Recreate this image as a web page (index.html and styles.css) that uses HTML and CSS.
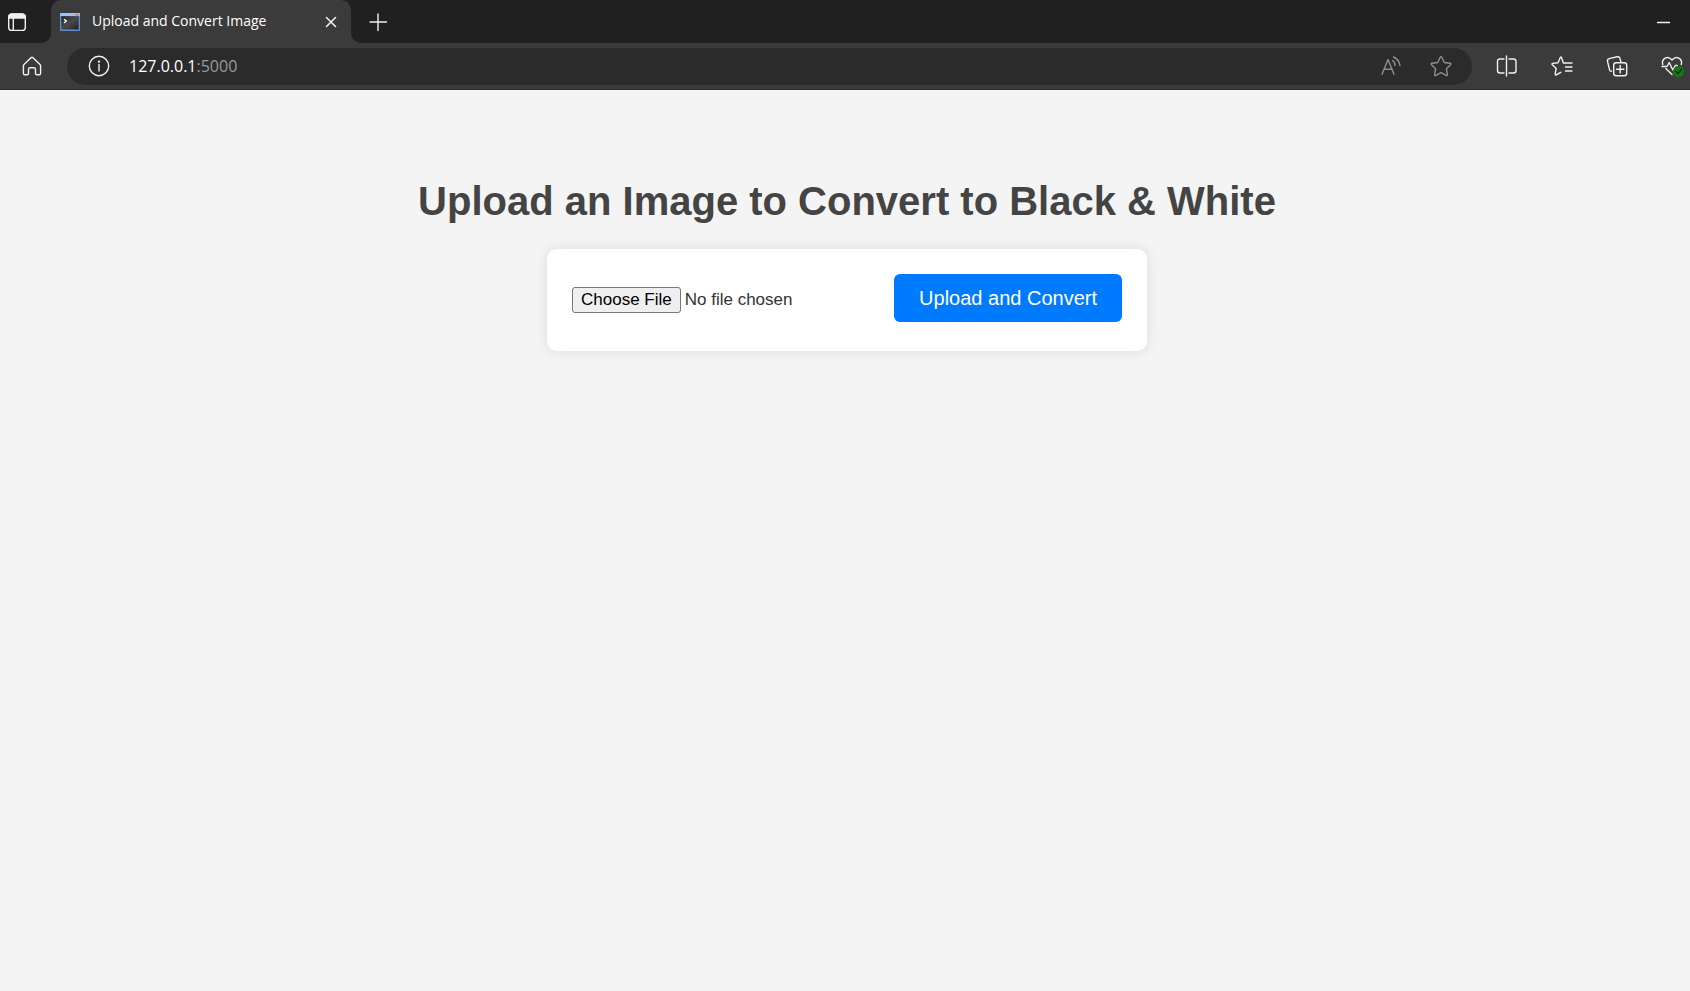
FILE: index.html
```html
<!DOCTYPE html>
<html lang="en">
<head>
<meta charset="utf-8">
<title>Upload and Convert Image</title>
<link rel="stylesheet" href="styles.css">
</head>
<body>
<header class="browser">
  <div class="tab-strip">
    <div class="strip-start">
      <button class="icon-button" type="button" aria-label="Tab actions">
        <svg class="icon" viewBox="0 0 24 24"><rect x="3.7" y="4.2" width="16.6" height="16.2" rx="3"/><path d="M8.3 8v12"/><path class="solid" d="M4 8V7q0-3 3-3h10q3 0 3 3v1z"/></svg>
      </button>
    </div>
    <div class="tab-slot">
      <div class="tab">
        <svg class="favicon" viewBox="0 0 20 18" aria-hidden="true">
          <defs><linearGradient id="screen" x1="0" y1="0" x2="1" y2="1"><stop offset="0" stop-color="#222"/><stop offset=".5" stop-color="#4a4a4a"/><stop offset="1" stop-color="#222"/></linearGradient></defs>
          <rect width="20" height="18" rx="1" fill="#5f8fd0"/>
          <rect x="0" y="0" width="20" height="3" rx="1" fill="#9cc3f2"/>
          <rect x="15.5" y="1" width="3" height="1.4" fill="#d66a5e"/>
          <rect x="1.3" y="3.2" width="17.4" height="13.3" fill="url(#screen)"/>
          <path d="M4 6.2l2.400 1.900L4 10" fill="none" stroke="#fff" stroke-width="1.300"/>
        </svg>
        <span class="tab-title">Upload and Convert Image</span>
        <button class="icon-button" type="button" aria-label="Close tab">
          <svg class="icon" viewBox="0 0 24 24"><path class="heavy" d="M7.500 7.500l9 9M16.500 7.500l-9 9"/></svg>
        </button>
      </div>
    </div>
    <div class="strip-end">
      <button class="icon-button" type="button" aria-label="New tab">
        <svg class="icon" viewBox="0 0 24 24"><path d="M12 4v16.500M4 12h16.500"/></svg>
      </button>
      <button class="icon-button" type="button" aria-label="Minimize">
        <svg class="icon" viewBox="0 0 24 24"><path d="M6.500 12.500h12"/></svg>
      </button>
    </div>
  </div>
  <div class="toolbar">
    <button class="icon-button" type="button" aria-label="Home">
      <svg class="icon" viewBox="0 0 24 24"><path d="M4 10.400 11 3.700q1-.9 2 0L20 10.400q.6.600.6 1.400v7.400q0 1.600-1.600 1.600h-2.100q-1.400 0-1.400-1.400v-4q0-1.700-1.700-1.700h-3.600q-1.700 0-1.700 1.700v4q0 1.400-1.400 1.400H5q-1.600 0-1.600-1.600v-7.400q0-.8.6-1.400z"/></svg>
    </button>
    <div class="address-bar">
      <button class="icon-button" type="button" aria-label="View site information">
        <svg class="icon" viewBox="0 0 24 24"><circle cx="12" cy="12" r="9.700"/><path d="M12 10.500v6.500"/><circle class="solid" cx="12" cy="7.600" r=".5"/></svg>
      </button>
      <span class="address">127.0.0.1<span class="port">:5000</span></span>
      <button class="icon-button dim" type="button" aria-label="Read aloud">
        <svg class="icon" viewBox="0 0 24 24"><path d="M3 20.200 9 5.500l6 14.700M5 15.200h8M13.500 6.500q2.500 1.500 2.500 5M14.500 3q5.500 2.500 6.500 8.500"/></svg>
      </button>
      <button class="icon-button dim" type="button" aria-label="Add to favorites">
        <svg class="icon" viewBox="0 0 24 24"><path d="M11.200 3.300q.8-1.300 1.600 0l2.500 5.200 5.700.8q1.500.3.500 1.400l-4.100 4 1 5.700q.1 1.500-1.300.9L12 18.600l-5.100 2.700q-1.400.6-1.300-.9l1-5.700-4.100-4q-1-1.100.5-1.400l5.700-.8z"/></svg>
      </button>
    </div>
    <div class="actions">
      <button class="icon-button" type="button" aria-label="Split screen">
        <svg class="icon" viewBox="0 0 24 24"><path d="M9 5H5Q2.500 5 2.500 7.500v9Q2.500 19 5 19h4M14 5h4.500Q21 5 21 7.500v9q0 2.500-2.500 2.500H14M11.500 2v20"/></svg>
      </button>
      <button class="icon-button" type="button" aria-label="Favorites">
        <svg class="icon" viewBox="0 0 24 24"><path d="M14.500 9H22M15.500 13H22M15.500 17H22M13.500 9.200 11.500 3.500q-.6-1-1.200 0L8 8.700l-5.200.7q-1.500.3-.4 1.400l3.800 3.600-1 5.700q0 1.400 1.200.8l4.300-2.600"/></svg>
      </button>
      <button class="icon-button" type="button" aria-label="Collections">
        <svg class="icon" viewBox="0 0 24 24"><rect x="8.700" y="8.700" width="13" height="13" rx="2.500"/><path d="M15.200 11.500v7.400M11.500 15.200h7.400M16 8.500l-1-4q-.6-2.200-2.800-1.700L4.200 4.600Q2 5.200 2.500 7.400l2 8.300q.5 1.500 2 1.500"/></svg>
      </button>
      <button class="icon-button" type="button" aria-label="Browser essentials">
        <svg class="icon" viewBox="0 0 24 24"><path d="M2.800 10.500Q1.700 7 4 4.900q4-3.200 8 1.100 4-4.300 8-1.100Q22.300 7 21.200 10.500M5.800 14.500l6.200 6M2 12.500h5l2.200-4 3.600 7.500 2.500-4.500h2"/><circle class="badge" cx="18.500" cy="17.500" r="5.500"/><path class="tick" d="M16 17.500l2 2 3.500-4"/></svg>
      </button>
    </div>
  </div>
</header>
<main class="page">
  <h1 class="title">Upload an Image to Convert to Black &amp; White</h1>
  <form class="upload-card">
    <input class="file-input" type="file" aria-label="Image file">
    <button class="submit" type="submit">Upload and Convert</button>
  </form>
</main>
</body>
</html>
```

FILE: styles.css
```css
* {
  box-sizing: border-box;
}

body {
  margin: 0;
  min-height: 100vh;
  background: #f4f4f4;
  color: #333;
  font-family: "Liberation Sans", Arial, sans-serif;
}

.browser {
  background: #3b3b3b;
  border-bottom: 1px solid #2b2b2b;
  color: #fff;
  font-family: "Open Sans", "Noto Sans", sans-serif;
}

.tab-strip {
  display: flex;
  height: 43px;
}

.strip-start,
.strip-end {
  display: flex;
  align-items: center;
  background: #202020;
}

.strip-start {
  width: 51px;
  padding-left: 5px;
  border-bottom-right-radius: 10px;
}

.strip-end {
  flex: 1;
  justify-content: space-between;
  padding: 0 15px;
  border-bottom-left-radius: 10px;
}

.tab-slot {
  width: 300px;
  background: #202020;
}

.tab {
  display: flex;
  align-items: center;
  height: 100%;
  padding: 0 8px 0 9px;
  border-radius: 10px 10px 0 0;
  background: #3b3b3b;
}

.favicon {
  width: 20px;
  height: 18px;
}

.tab-title {
  flex: 1;
  margin-left: 12px;
  padding-bottom: 2px;
  font-size: 14px;
  white-space: nowrap;
}

.icon-button {
  display: block;
  flex: none;
  width: 24px;
  height: 24px;
  padding: 0;
  border: 0;
  background: none;
  color: #f0f0f0;
}

.dim {
  color: #8f8f8f;
}

.icon {
  display: block;
  width: 24px;
  height: 24px;
  fill: none;
  stroke: currentColor;
  stroke-width: 1.4;
  stroke-linecap: round;
  stroke-linejoin: round;
}

.icon .solid {
  fill: currentColor;
}

.icon .heavy {
  stroke-width: 1.6;
}

.icon .badge {
  fill: #107c10;
  stroke: none;
}

.icon .tick {
  stroke: #202020;
}

.toolbar {
  display: flex;
  align-items: center;
  height: 46px;
  padding: 0 6px 0 20px;
}

.address-bar {
  display: flex;
  flex: 1;
  align-items: center;
  gap: 26px;
  height: 37px;
  margin: 0 23px;
  padding: 0 19px 0 20px;
  border-radius: 19px;
  background: #2b2b2b;
}

.address {
  flex: 1;
  margin-left: -8px;
  font-size: 16px;
}

.port {
  color: #9a9a9a;
}

.actions {
  display: flex;
  gap: 31px;
}

.page {
  display: flex;
  flex-direction: column;
  align-items: center;
  padding: 88px 0 50px 4px;
}

.title {
  margin: 0 0 25px;
  color: #444;
  font-size: 40px;
  line-height: 46px;
  text-align: center;
}

.upload-card {
  display: flex;
  align-items: flex-start;
  justify-content: space-between;
  width: 100%;
  max-width: 600px;
  padding: 25px 25px 29px;
  border-radius: 10px;
  background: #fff;
  box-shadow: 0 0 13px rgba(0, 0, 0, 0.1);
}

.file-input {
  margin-top: 13px;
  color: #333;
  font-family: inherit;
  font-size: 17px;
}

.file-input::file-selector-button {
  height: 26px;
  padding: 0 8px;
  border: 1px solid #767676;
  border-radius: 3px;
  background: #efefef;
  color: #000;
  font-family: inherit;
  font-size: 17px;
}

.submit {
  padding: 12px 25px;
  border: 0;
  border-radius: 6px;
  background: #007bff;
  color: #fff;
  font-family: inherit;
  font-size: 20px;
  line-height: 24px;
}
```
